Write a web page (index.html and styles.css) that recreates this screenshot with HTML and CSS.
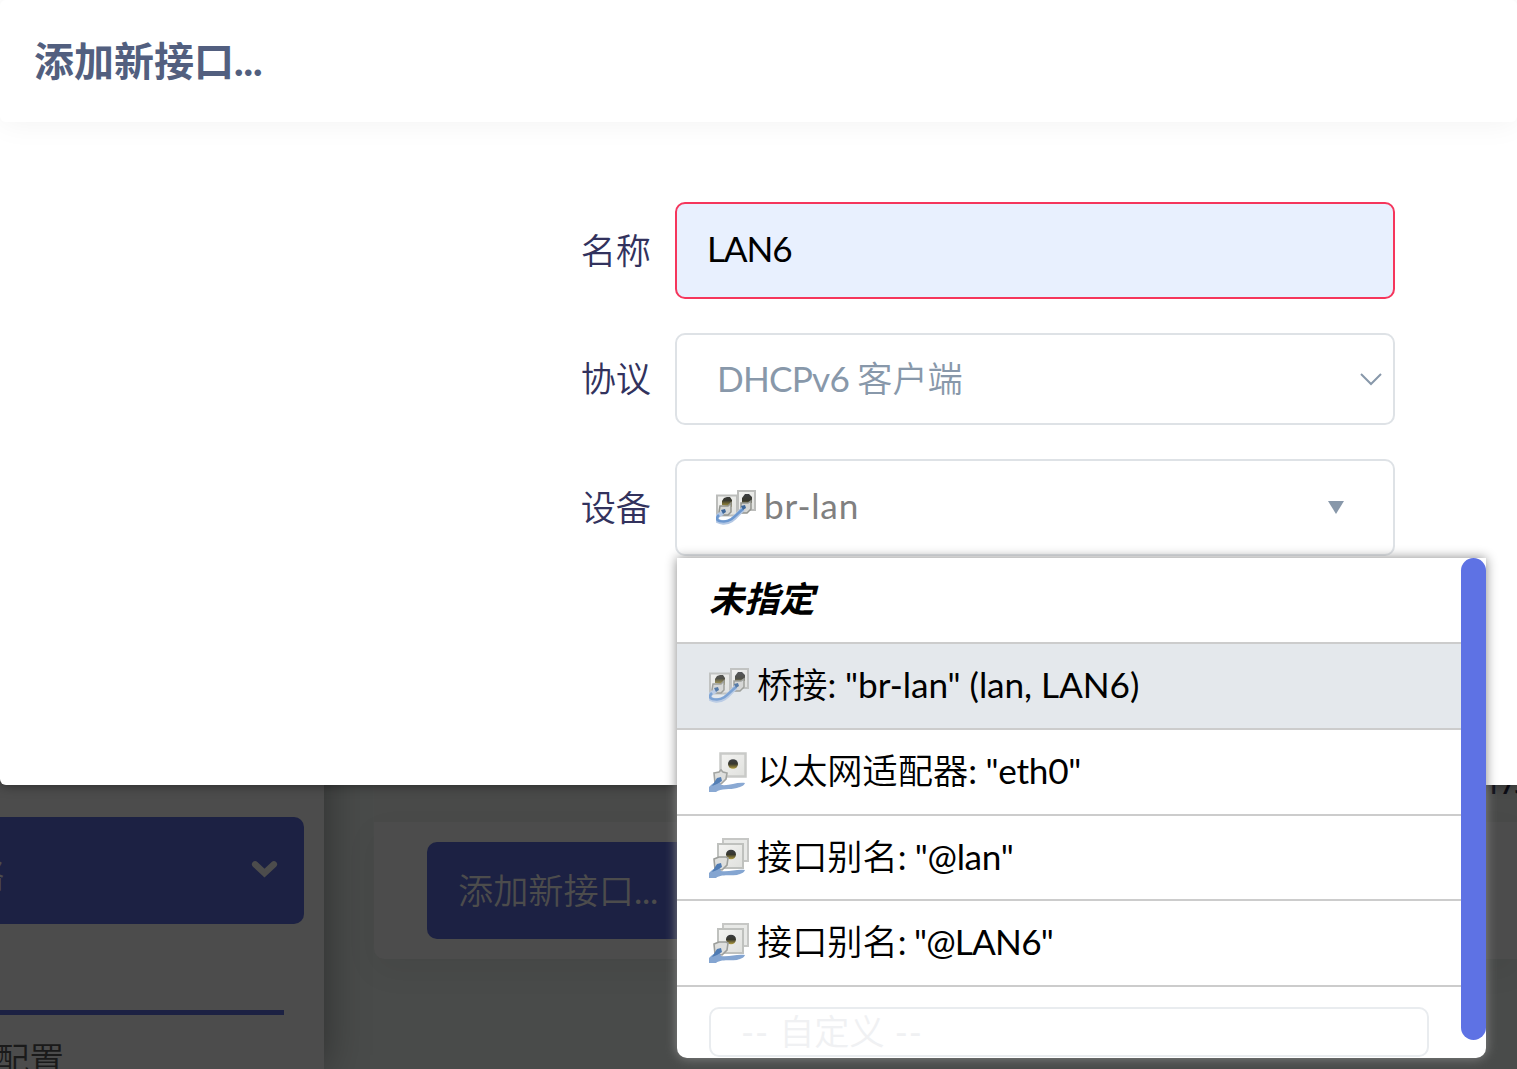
FILE: index.html
```html
<!DOCTYPE html>
<html lang="zh-CN">
<head>
<meta charset="utf-8">
<title>添加新接口</title>
<link rel="stylesheet" href="styles.css">
</head>
<body>
<svg class="symbols" aria-hidden="true">
  <defs>
    <linearGradient id="plate" x1="0" y1="0" x2="1" y2="1"><stop offset="0" stop-color="#f4f4f2"/><stop offset="1" stop-color="#dfe0dd"/></linearGradient>
    <linearGradient id="hole" x1="0" y1="0" x2="0" y2="1"><stop offset="0" stop-color="#3c3e42"/><stop offset=".5" stop-color="#38382e"/><stop offset="1" stop-color="#b5a040"/></linearGradient>
    <symbol id="bridge" viewBox="0 0 40 40">
      <path d="M1 7.500h20v20H1z" fill="url(#plate)" stroke="#bcbdbb" stroke-width="2"/>
      <path d="M22 3h17v19H22z" fill="url(#plate)" stroke="#bcbdbb" stroke-width="2"/>
      <path d="M6 17v-4l2-3 3-1h3l2 3v7zM26 15v-5l3-4h4l3 3v6z" fill="url(#hole)"/>
      <path d="M4 18h8l3-3v9l-3 3H5l-2-3zM25 15h7l3-2v8l-4 4h-6z" fill="#d4d5d3" stroke="#92948f" stroke-width="1.500"/>
      <path d="M7 25c-8 3-9 9 0 9.500 9 .5 13-7 20-13.500" fill="none" stroke="#b4c8e4" stroke-width="4.500"/>
      <path d="M3 27c-4 4-2 6.500 5 6.500 8 0 12-7 19-12.500" fill="none" stroke="#6c98d0" stroke-width="2.600"/>
      <path d="M5 22l4-1 1 3-3 2zM25 18l4-1 1 3-3 2z" fill="#3d679b"/>
    </symbol>
    <symbol id="ethernet" viewBox="0 0 40 40">
      <path d="M11.500 1.500h25v23h-25z" fill="url(#plate)" stroke="#c9cac8" stroke-width="2.500"/>
      <ellipse cx="24" cy="12" rx="5" ry="4.800" fill="url(#hole)"/>
      <path d="M5 21l5-1 2-2 2 2 4 1-1 6-5 5-6-1z" fill="#dedfdd" stroke="#a2a4a1" stroke-width="1.600"/>
      <path d="M0 35c4-4 6-6 11-5l1 3c9 1 15-3 24-2-1 3-5 4-8 5-7 2-16 0-21 4H0z" fill="#8aa9d3"/>
      <path d="M8 26l4-1 1 4-5 3-5 2c2-3 3-5 5-8z" fill="#547fb5"/>
    </symbol>
    <symbol id="alias" viewBox="0 0 40 40">
      <path d="M14 1h25v22H14z" fill="#e8e9e7" stroke="#c6c7c5" stroke-width="2"/>
      <path d="M9 6h25v24H9z" fill="url(#plate)" stroke="#bfc1be" stroke-width="2"/>
      <ellipse cx="22" cy="16.500" rx="5" ry="4.800" fill="url(#hole)"/>
      <path d="M5 21l5-2h7l2 1-1 7-5 5-7-1z" fill="#dedfdd" stroke="#9c9e9b" stroke-width="1.600"/>
      <path d="M0 35c4-4 6-6 11-5l1 3c9 1 15-2 24-1-1 3-5 4-8 5-7 1-16-1-21 3H0z" fill="#84a5d1"/>
      <path d="M8 26l4-1 1 4-5 3-5 2c2-3 3-5 5-8z" fill="#4f7bb3"/>
    </symbol>
  </defs>
</svg>

<div class="page">
  <aside class="sidebar">
    <div class="nav-active"><span class="nav-name">网络</span>
      <svg class="nav-arrow" viewBox="0 0 26 17"><path d="M4 4l9 8.500L22 4" fill="none" stroke="#4c4c4c" stroke-width="6.200" stroke-linecap="round"/></svg>
    </div>
    <div class="nav-line"></div>
    <div class="nav-sub"><span>配置</span></div>
  </aside>
  <main class="content">
    <div class="status">173</div>
    <div class="card"><div class="add-button">添加新接口<span class="dots">...</span></div></div>
  </main>
</div>

<section class="modal">
  <header class="modal-head"><h4>添加新接口<span class="dots">...</span></h4></header>
  <form class="form">
    <div class="row">
      <label>名称</label>
      <div class="field name-field"><span class="latin w-name">LAN6</span></div>
    </div>
    <div class="row">
      <label>协议</label>
      <div class="field select"><span class="value"><span class="latin w-proto">DHCPv6 </span>客户端</span>
        <svg class="chevron" viewBox="0 0 22 13"><path d="M1 1l10 10L21 1" fill="none" stroke="#8898aa" stroke-width="2"/></svg>
      </div>
    </div>
    <div class="row">
      <label>设备</label>
      <div class="field device">
        <svg class="icon"><use href="#bridge"/></svg><span class="latin w-dev">br-lan</span>
        <svg class="caret" viewBox="0 0 16 13"><path d="M0 0h16L8 13z" fill="#8898aa"/></svg>
        <div class="menu">
          <ul>
            <li class="none"><span class="item">未指定</span></li>
            <li class="selected"><svg class="icon faded"><use href="#bridge"/></svg><span class="item">桥接<span class="latin w-bridge">: "br-lan" (lan, LAN6)</span></span></li>
            <li><svg class="icon"><use href="#ethernet"/></svg><span class="item">以太网适配器<span class="latin w-eth">: "eth0"</span></span></li>
            <li class="short"><svg class="icon"><use href="#alias"/></svg><span class="item">接口别名<span class="latin w-alias">: "@lan"</span></span></li>
            <li><svg class="icon"><use href="#alias"/></svg><span class="item">接口别名<span class="latin w-alias6">: "@LAN6"</span></span></li>
            <li class="custom"><div class="custom-input"><span class="dash">-- </span>自定义<span class="dash"> --</span></div></li>
          </ul>
          <div class="thumb"></div>
        </div>
      </div>
    </div>
  </form>
</section>
</body>
</html>
```
FILE: styles.css
```css
* { box-sizing: border-box; }

body {
  margin: 0;
  width: 1517px;
  height: 1069px;
  position: relative;
  overflow: hidden;
  background: #494b4a;
  font: 350 35.2px/48px "Noto Sans CJK SC", sans-serif;
  color: #000;
}

.symbols { position: absolute; width: 0; height: 0; }
.latin { font-family: Lato, sans-serif; font-weight: 400; white-space: pre; }

/* dimmed page behind the dialog */
.page { display: flex; height: 1069px; }
.sidebar {
  width: 324px;
  flex: none;
  padding-top: 817px;
  background: #4c4c4c;
  box-shadow: 0 0 40px rgba(0, 0, 0, .4);
  z-index: 1;
}
.nav-active {
  width: 304px;
  height: 107px;
  display: flex;
  align-items: center;
  justify-content: space-between;
  padding: 4px 26px 0 0;
  border-radius: 0 10px 10px 0;
  background: #1c2143;
  color: #4c4c4c;
}
.nav-name { margin-left: -66px; }
.nav-arrow { width: 27px; height: 18px; margin-top: -7px; }
.nav-line { width: 284px; height: 5px; margin-top: 86px; background: #1c2143; }
.nav-sub { height: 54px; padding-top: 19px; margin-left: -6px; color: #1a1a1a; }
.content { flex: 1; min-width: 0; padding-left: 50px; }
.status {
  height: 822px;
  padding: 757px 0 0 1109px;
  white-space: nowrap;
  font-family: "Noto Sans", sans-serif;
  font-weight: 400;
  font-size: 34px;
  letter-spacing: -4px;
  color: #0d0d16;
  background: #494a49;
}
.card {
  height: 137px;
  padding: 20px 0 0 53px;
  border-radius: 0 0 0 10px;
  background: #4c4c4c;
  box-shadow: 0 12px 32px rgba(0, 0, 0, .06);
}
.add-button {
  width: 280px;
  height: 97px;
  padding-left: 31px;
  line-height: 94px;
  border-radius: 10px;
  background: #1c2143;
  color: #4c4c4c;
}

.dots { font-family: Lato, sans-serif; font-weight: 400; letter-spacing: -.3px; }

/* dialog */
.modal {
  position: absolute;
  inset: 0 0 auto 0;
  height: 785px;
  border-radius: 0 0 0 6px;
  background: #fff;
  box-shadow: 0 0 12px rgba(0, 0, 0, .5);
  z-index: 2;
}
.modal-head {
  height: 122px;
  padding: 29px 34px 0;
  border-radius: 6px;
  box-shadow: 0 0 32px rgba(0, 0, 0, .06);
  clip-path: inset(0 0 -40px 0);
}
h4 { margin: 0; font-size: 40px; line-height: 60px; font-weight: 700; color: #525f7f; }
h4 .dots { font-weight: 900; letter-spacing: 0; }

.form { display: flex; flex-direction: column; gap: 34px; padding-top: 80px; }
.row { display: flex; align-items: center; }
.row label { width: 651px; margin-right: 24px; padding-bottom: 4px; text-align: right; color: #32325d; }
.field {
  width: 720px;
  height: 97px;
  display: flex;
  align-items: center;
  border: 2px solid #dee2e6;
  border-radius: 10px;
}
.name-field { padding: 0 0 5px 30px; background: #e8f0fe; border-color: #f5365c; }
.w-name { letter-spacing: -1.2px; }
.select { height: 92px; padding: 0 11px 0 40px; justify-content: space-between; color: #8898aa; }
.value { padding-bottom: 4px; }
.w-proto { letter-spacing: -.8px; }
.chevron { width: 22px; height: 13px; }
.device { position: relative; padding-left: 39px; color: #808080; }
.w-dev { letter-spacing: .8px; padding-bottom: 5px; margin-left: -1px; }
.icon { width: 40px; height: 40px; margin-right: 9px; flex: none; filter: blur(.65px); }
.faded { opacity: .85; }
.caret { width: 16px; height: 13px; margin: 0 49px 0 auto; }

/* device list */
.menu {
  position: absolute;
  left: 0;
  top: 97px;
  width: 809px;
  height: 500px;
  display: flex;
  border-radius: 0 0 10px 10px;
  background: #fff;
  box-shadow: 0 0 12px #888;
  color: #000;
}
.menu ul { list-style: none; margin: 0; padding: 0; width: 784px; }
.menu li {
  height: 86px;
  padding: 0 32px;
  display: flex;
  align-items: center;
  border-bottom: 2px solid #ccc;
  white-space: nowrap;
}
.item { padding-bottom: 5px; }
.icon + .item { margin-left: -1px; }
.w-bridge { letter-spacing: -.06px; }
.w-eth { letter-spacing: -.25px; }
.w-alias { letter-spacing: -.35px; }
.w-alias6 { letter-spacing: -.8px; }
.menu .none { padding-bottom: 1px; font-weight: 700; font-style: italic; }
.menu .selected { background: #e4e8ec; }
.menu .short { height: 85px; }
.menu .custom { height: 71px; padding-top: 20px; border: 0; align-items: flex-start; }
.custom-input {
  width: 720px;
  height: 50px;
  flex: none;
  padding-left: 30px;
  line-height: 42px;
  border: 2px solid #e9ecef;
  border-radius: 10px;
  color: #f0f1f3;
}
.dash { font-family: Lato, sans-serif; font-weight: 400; letter-spacing: 1px; white-space: pre; }
.thumb { width: 25px; height: 482px; border-radius: 12.5px; background: #5e72e4; }
```
